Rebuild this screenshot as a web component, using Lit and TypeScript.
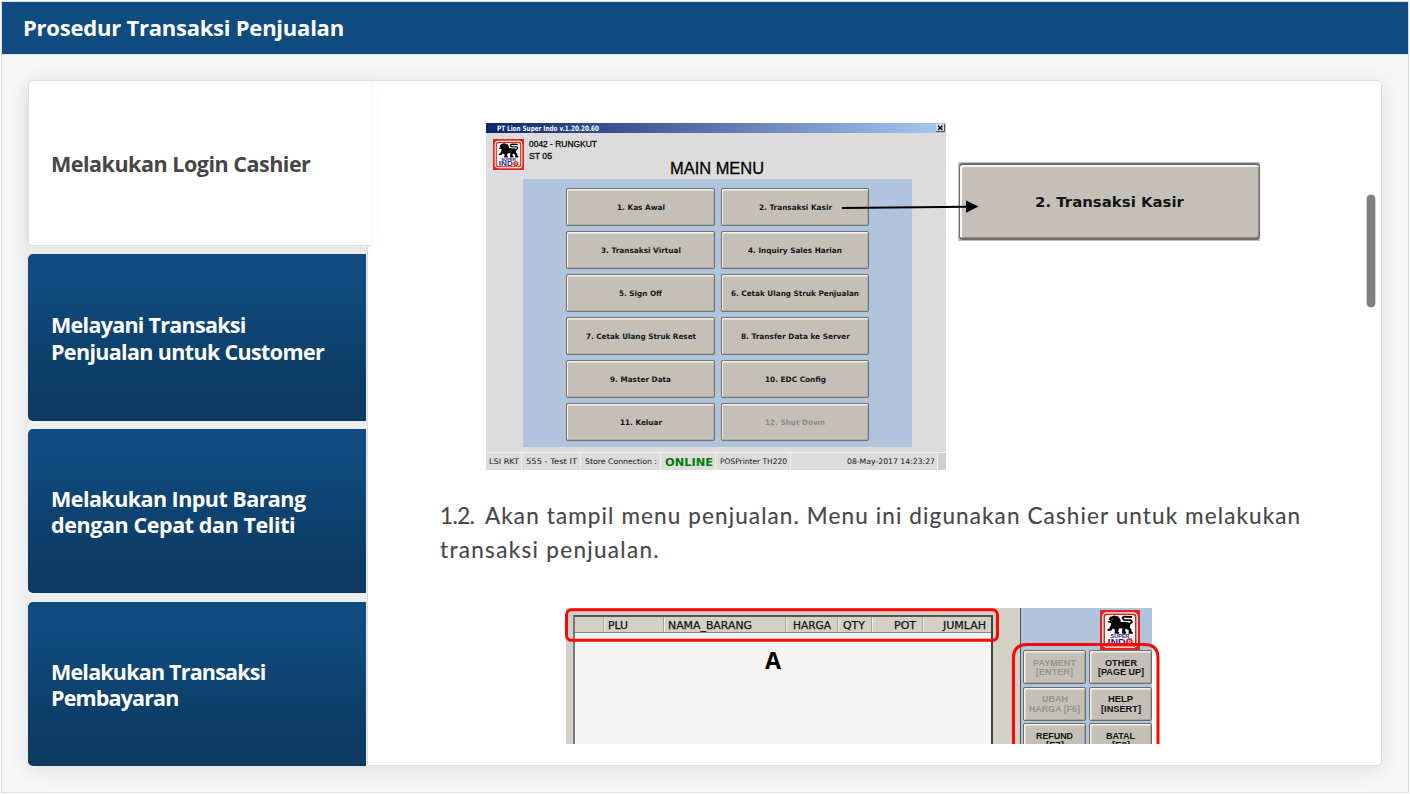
import { LitElement, html, css, svg } from "lit";
import { customElement } from "lit/decorators.js";

/** A single line of picture lettering, set to an exact width. */
const label = (text: string, width: number, size: number, cls = "") => html`
  <svg class="label ${cls}" width=${width} height=${size} aria-label=${text}>
    <text x="0" y=${size * 0.865} font-size=${size} textLength=${width} lengthAdjust="spacingAndGlyphs" xml:space="preserve">${text}</text>
  </svg>`;

const lion = svg`
  <rect width="40" height="40" fill="#e2231a"/>
  <rect x="2.8" y="2.8" width="34.4" height="34.4" rx="4" fill="#e2231a" stroke="#fff" stroke-width="1.3"/>
  <rect x="5" y="5" width="30" height="30" rx="2.5" fill="#fff"/>
  <path fill="#000" d="M8.4 9.6 L10 7 L14 5.6 L18.4 6.4 L20.4 9.4 L20.8 12 L25 11.8 L28.8 12.4 L30.2 14.6 L29.8 17.4 L31.6 19.2 L31.4 21.2 L33 22.6 L32.6 23.8 L28.4 23.8 L28.8 20.6 L26 18.6 L24.8 20.6 L26.4 22.4 L26 23.8 L22 23.8 L22.4 18.2 L19 18.4 L18 21.6 L19.4 22.6 L19 23.8 L14.6 23.8 L14.8 19.4 L12.6 18.6 L11.2 20.8 L7.8 21 L7.2 19.6 L9.4 18.2 L10.6 15.8 L11.2 13.2 L8.2 12.6 L8 11.2 L10.6 10.8 Z"/>
  <path fill="none" stroke="#000" stroke-width="1.8" stroke-linejoin="round" d="M29.4 14 L32 12 L31 10.2 L23.8 9.8 L22.4 7.8 L24.6 6.6 L32 7"/>
  <path fill="none" stroke="#fff" stroke-width=".5" d="M12 8.8 l1.6 .4"/>
  <g font-family="Liberation Sans" font-weight="700" fill="#28227c">
    <text x="10.6" y="28.2" font-size="4.8" textLength="19" lengthAdjust="spacingAndGlyphs">SUPER</text>
    <text x="7.6" y="34.8" font-size="8.6" textLength="18" lengthAdjust="spacingAndGlyphs">IND</text>
  </g>
  <circle cx="29.4" cy="31.6" r="2.4" fill="#fff" stroke="#e2231a" stroke-width="1.9"/>
  <circle cx="29.4" cy="31.6" r=".8" fill="#e2231a"/>`;
const logo = (size: number) => html`<svg class="logo" width=${size} height=${size} viewBox="0 0 40 40">${lion}</svg>`;

@customElement("menu-figure")
class MenuFigure extends LitElement {
  static styles = css`
    :host { display: flex; gap: 12px; position: relative; height: 347px; margin-left: 46px; }
    .window { width: 460px; height: 347px; background: #dcdcdc; display: flex; flex-direction: column; }
    .title { height: 10px; background: linear-gradient(90deg, #0f246c, #a6caf0); display: flex; align-items: center; justify-content: space-between; padding: 0 1px 0 11px; }
    .close { width: 9px; height: 8px; background: #dcd8d0; display: block; }
    .label, .logo, .arrow { display: block; overflow: visible; }
    .label { fill: #151515; font-family: "DejaVu Sans", sans-serif; }
    .bold { font-weight: 700; }
    .white { fill: #f4f6fb; }
    .title .label { margin-top: 1px; }
    .arial { font-family: "Liberation Sans", sans-serif; fill: #000; }
    .semi { stroke: #111; stroke-width: .3px; }
    .off { fill: #8c8b88; }
    .online { fill: #008000; font-weight: 700; }
    .head { display: flex; height: 46px; padding-left: 7px; }
    .head .logo { margin-top: 6px; }
    .store { width: 70px; margin: 6px 0 0 5px; display: flex; flex-direction: column; gap: 3px; }
    .main { margin: 27px 0 0 71px; }
    .main .label { stroke: #000; stroke-width: .3px; }
    .panel { margin-left: 37px; width: 389px; height: 268px; box-sizing: border-box; background: #b0c4de; padding: 9px 43px 7px; display: grid; grid-template-columns: 149px 148px; column-gap: 6px; grid-auto-rows: 38px; row-gap: 5px; }
    .btn { box-sizing: border-box; background: #c4c0b8; border: 1px solid #77736e; border-radius: 2px; box-shadow: inset 1px 1.5px 0 #f4f1e8, inset -1px -1px 0 #b3aea6, 0 0 1px #8b98ad; display: flex; align-items: center; justify-content: center; }
    .status { margin-top: 5px; height: 18px; border-top: 1px solid #f2f2f2; box-sizing: border-box; display: grid; grid-template-columns: 36px 59px 80px 55px 75px 147px 8px; }
    .cell { border-right: 1px solid #f0f0f0; display: flex; align-items: center; padding: 0 0 1px 4px; }
    .first { padding-left: 3px; }
    .last { justify-content: flex-end; padding-right: 2px; }
    .grip { background: #d4d0c8; }
    .zoomed { margin-top: 39px; width: 302px; height: 79px; box-sizing: border-box; background: #b0c4de; padding: 1px 0 1px 1px; display: flex; }
    .big { flex: 1; border: 1.6px solid #706a66; border-width: 2px 1px; border-radius: 4px; box-shadow: inset 2px 2px 1px #fbf6f2, inset -1px -1px 1px #8f8983; }
    .big .label { margin-bottom: 1px; }
    .arrow { position: absolute; left: 356px; top: 76px; }
  `;
  items: [string, number][] = [
    ["1. Kas Awal", 48], ["2. Transaksi Kasir", 73], ["3. Transaksi Virtual", 80], ["4. Inquiry Sales Harian", 94],
    ["5. Sign Off", 43], ["6. Cetak Ulang Struk Penjualan", 128], ["7. Cetak Ulang Struk Reset", 110], ["8. Transfer Data ke Server", 109],
    ["9. Master Data", 61], ["10. EDC Config", 61], ["11. Keluar", 42], ["12. Shut Down", 60],
  ];
  render() {
    return html`
      <div class="window">
        <div class="title">${label("PT Lion Super Indo v.1.20.20.60", 102, 7.3, "bold white")}
          <svg class="close" viewBox="0 0 9 8"><path d="M8.5 0V7.5H0" fill="none" stroke="#555"/><path d="M2 1.8l4.4 4.2M6.4 1.8L2 6" stroke="#000" stroke-width="1.2"/></svg>
        </div>
        <div class="head">${logo(31)}
          <div class="store">${label("0042 - RUNGKUT", 68, 9, "arial semi")}${label("ST 05", 23, 9, "arial semi")}</div>
          <div class="main">${label("MAIN MENU", 94, 16.5, "arial")}</div>
        </div>
        <div class="panel">${this.items.map(([t, w]) => html`<div class="btn">${label(t, w, 7.5, t.startsWith("12") ? "bold off" : "bold")}</div>`)}</div>
        <div class="status">
          <div class="cell first">${label("LSI RKT", 30, 7.6)}</div>
          <div class="cell">${label("555 - Test IT", 51, 7.6)}</div>
          <div class="cell">${label("Store Connection :", 72, 7.6)}</div>
          <div class="cell">${label("ONLINE", 48, 11, "online")}</div>
          <div class="cell">${label("POSPrinter TH220", 67, 7.6)}</div>
          <div class="cell last">${label("08-May-2017 14:23:27", 88, 7.6)}</div>
          <div class="grip"></div>
        </div>
      </div>
      <div class="zoomed"><div class="btn big">${label("2. Transaksi Kasir", 149, 14.8, "bold")}</div></div>
      <svg class="arrow" width="138" height="16"><path d="M0 9 L126 7.8" stroke="#000" stroke-width="1.9"/><path d="M124 1.5 L136.5 7.5 L124 13.7Z"/></svg>`;
  }
}

@customElement("sales-figure")
class SalesFigure extends LitElement {
  static styles = css`
    :host { display: flex; position: relative; width: 587px; height: 160px; margin-left: 126px; flex: none; }
    .label, .logo, .frame { display: block; overflow: visible; }
    .label { fill: #111; font-family: "DejaVu Sans", sans-serif; }
    .left { width: 455px; background: #d4d0c8; padding: 7px 27px 0 7px; box-sizing: border-box; border-right: 1px solid #4c5557; }
    .table { height: 153px; background: #f4f4f4; border: 2px solid #555953; border-bottom: 0; border-right-color: #40443f; border-left-color: #777973; box-sizing: border-box; }
    .cols { display: grid; grid-template-columns: 29px 60px 122px 52px 34px 51px 69px; height: 15px; background: #d4d0c8; border-bottom: 1px solid #858582; }
    .col { border-right: 1px solid #a7a49d; box-shadow: 1px 0 #efede8; padding: 2px 0 0 4px; display: flex; align-items: center; }
    .num { justify-content: flex-end; padding: 2px 6px 0 0; }
    .col:last-child { border: 0; box-shadow: none; }
    .thin { stroke: #111; stroke-width: .25px; }
    .mark { display: flex; justify-content: center; padding: 16px 0 0 0; margin-left: -20px; }
    .a { font-family: "Open Sans", sans-serif; font-weight: 700; fill: #000; }
    .right { width: 131px; background: #b0c4de; padding: 2px 0 0 2px; box-sizing: border-box; }
    .brand { display: flex; justify-content: flex-end; padding: 0 12px 0 0; height: 40px; }
    .keys { display: grid; grid-template-columns: 63px 63px; column-gap: 3px; grid-auto-rows: 34px; row-gap: 2.6px; }
    .key { box-sizing: border-box; border: 1px solid #6f6c68; border-radius: 2px; background: #c4c0b8; box-shadow: inset 1.5px 1.5px 0 #f5f1e9, inset -1px -1px 0 #aaa69f; display: flex; flex-direction: column; align-items: center; justify-content: center; }
    .k { font-family: "Liberation Sans", sans-serif; font-weight: 700; }
    .off { fill: #96948f; }
    .frame { position: absolute; left: -2px; top: 0; fill: none; stroke: #f90808; stroke-width: 3px; }
  `;
  keys: [string, number, string, number, boolean][] = [
    ["PAYMENT", 43, "[ENTER]", 37, true], ["OTHER", 32, "[PAGE UP]", 46, false],
    ["UBAH", 26, "HARGA [F6]", 51, true], ["HELP", 25, "[INSERT]", 40, false],
    ["REFUND", 37, "[F7]", 18, false], ["BATAL", 29, "[F2]", 18, false],
  ];
  render() {
    return html`
      <div class="left"><div class="table">
        <div class="cols">
          <div class="col"></div>
          <div class="col">${label("PLU", 20, 10.5, "thin")}</div>
          <div class="col">${label("NAMA_BARANG", 84, 10.5, "thin")}</div>
          <div class="col num">${label("HARGA", 38, 10.5, "thin")}</div>
          <div class="col num">${label("QTY", 22, 10.5, "thin")}</div>
          <div class="col num">${label("POT", 22, 10.5, "thin")}</div>
          <div class="col num">${label("JUMLAH", 43, 10.5, "thin")}</div>
        </div>
        <div class="mark">${label("A", 16, 23.5, "a")}</div>
      </div></div>
      <div class="right">
        <div class="brand">${logo(40)}</div>
        <div class="keys">${this.keys.map(([a, aw, b, bw, off]) => html`<div class="key">${label(a, aw, 9.2, off ? "k off" : "k")}${label(b, bw, 9.2, off ? "k off" : "k")}</div>`)}</div>
      </div>
      <svg class="frame" width="600" height="160"><rect x="2.5" y="1.8" width="431" height="30.5" rx="5"/><path d="M449.5 160V50Q449.5 36.5 463 36.5H580.5Q594 36.5 594 50V160"/></svg>`;
  }
}

@customElement("app-root")
class AppRoot extends LitElement {
  static styles = css`
    :host { display: block; width: 1410px; height: 794px; box-sizing: border-box; padding: 2px 2px 1px 2px; background: #fff; overflow: hidden; font-family: "Open Sans", "Noto Sans", sans-serif; }
    .frame { height: 790px; box-sizing: border-box; outline: 1px solid #d9dee2; background: #f7f7f7; display: flex; flex-direction: column; overflow: hidden; }
    .bar { height: 52px; flex: none; box-sizing: border-box; background: #104c80; color: #fff; display: flex; align-items: center; padding: 0 0 2px 21px; font-size: 22px; font-weight: 700; letter-spacing: -0.23px; box-shadow: 0 1px #e3e8ec; }
    .body { display: grid; grid-template-columns: 339px 1015px; width: 1354px; height: 686px; margin: 26px 0 0 26px; border-radius: 5px; box-shadow: 0 4px 22px rgba(0, 0, 0, .11); }
    .tabs { background: #eee; display: grid; grid-template-rows: 166px 167px 164px 164px; row-gap: 8px; border-radius: 5px 0 0 5px; }
    .tab { box-sizing: border-box; width: 338px; padding: 2px 23px 0; display: flex; align-items: center; color: #fff; font-weight: 700; font-size: 21.5px; line-height: 26.5px; white-space: nowrap; border-radius: 5px 0 0 5px; background: linear-gradient(#104c80 12%, #0c3a62 88%); }
    .tab:last-child { height: 164px; margin-top: 1px; }
    .tab.active { width: 342px; background: #fff; color: #464646; border: 1px solid #ddd; border-right: 0; padding: 3px 22px 0; position: relative; z-index: 1; box-shadow: 0 4px 14px rgba(0, 0, 0, .05); letter-spacing: -0.48px; }
    .l { display: block; }
    .content { box-sizing: border-box; background: #fff; border: 1px solid #ddd; border-radius: 0 5px 5px 0; height: 686px; display: flex; justify-content: space-between; overflow: hidden; }
    .view { margin: 42px 0 0 72px; width: 880px; height: 621px; overflow: hidden; display: flex; flex-direction: column; }
    .text { flex: none; height: 68px; margin: 29px 0 41px; font-family: Lato, sans-serif; color: #464646; font-size: 22.5px; line-height: 34px; white-space: nowrap; -webkit-text-stroke: .15px #464646; }
    .line { letter-spacing: 1.12px; }
    .line.short { letter-spacing: 1.32px; }
    .no { display: inline-block; width: 45px; letter-spacing: -0.6px; }
    .thumb { width: 8px; height: 112px; border-radius: 4px; margin: 114px 6px 0 0; background: #808080; box-shadow: 0 0 0 .5px #a5a5a5; }
  `;
  tabs: [string, number][][] = [
    [["Melayani Transaksi", -0.72], ["Penjualan untuk Customer", -0.65]],
    [["Melakukan Input Barang", -0.54], ["dengan Cepat dan Teliti", -0.41]],
    [["Melakukan Transaksi", -0.8], ["Pembayaran", -0.85]],
  ];
  render() {
    return html`
      <div class="frame">
        <div class="bar">Prosedur Transaksi Penjualan</div>
        <div class="body">
          <div class="tabs">
            <div class="tab active">Melakukan Login Cashier</div>
            ${this.tabs.map((lines) => html`<div class="tab"><div>${lines.map(([t, s]) => html`<span class="l" style="letter-spacing:${s}px">${t}</span>`)}</div></div>`)}
          </div>
          <div class="content">
            <div class="view">
              <menu-figure></menu-figure>
              <div class="text">
                <div class="line"><span class="no">1.2.</span>Akan tampil menu penjualan. Menu ini digunakan Cashier untuk melakukan</div>
                <div class="line short">transaksi penjualan.</div>
              </div>
              <sales-figure></sales-figure>
            </div>
            <div class="thumb"></div>
          </div>
        </div>
      </div>`;
  }
}
